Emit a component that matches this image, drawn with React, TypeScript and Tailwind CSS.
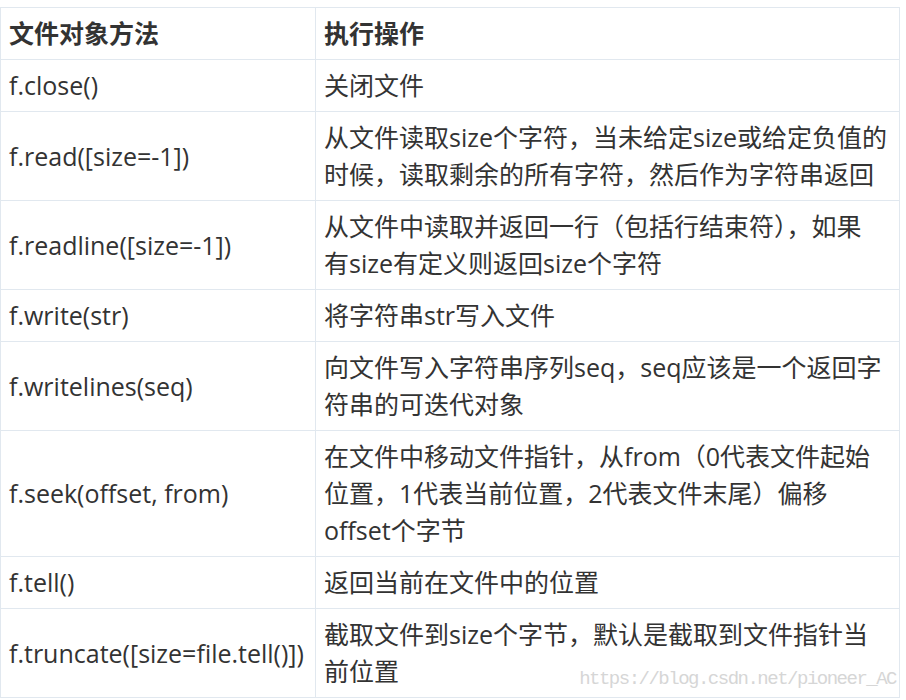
import type { ReactNode } from 'react';

const rows: [string, ReactNode][] = [
  ['f.close()', '关闭文件'],
  ['f.read([size=-1])', '从文件读取size个字符，当未给定size或给定负值的时候，读取剩余的所有字符，然后作为字符串返回'],
  ['f.readline([size=-1])', <>从文件中读取并返回一行（包括行结束符），如果<br />有size有定义则返回size个字符</>],
  ['f.write(str)', '将字符串str写入文件'],
  ['f.writelines(seq)', '向文件写入字符串序列seq，seq应该是一个返回字符串的可迭代对象'],
  ['f.seek(offset, from)', '在文件中移动文件指针，从from（0代表文件起始位置，1代表当前位置，2代表文件末尾）偏移offset个字节'],
  ['f.tell()', '返回当前在文件中的位置'],
  ['f.truncate([size=file.tell()])', '截取文件到size个字节，默认是截取到文件指针当前位置'],
];

export default function App() {
  return (
    <div className="relative w-[906px] h-[700px] bg-white pt-[7px] font-['Open_Sans','Noto_Sans_CJK_SC',sans-serif] text-[#333] text-[25px] leading-[37px]">
      <table className="w-[900px] table-fixed border-collapse">
        <colgroup>
          <col className="w-[315px]" />
          <col />
        </colgroup>
        <thead>
          <tr>
            <th className="border border-[#e1e8ef] px-[8px] py-[7px] text-left font-bold">文件对象方法</th>
            <th className="border border-[#e1e8ef] px-[8px] py-[7px] text-left font-bold">执行操作</th>
          </tr>
        </thead>
        <tbody>
          {rows.map(([method, desc], i) => (
            <tr key={i}>
              <td className="border border-[#e1e8ef] px-[8px] py-[7px] align-middle whitespace-nowrap">{method}</td>
              <td className="border border-[#e1e8ef] px-[8px] py-[7px] align-middle">{desc}</td>
            </tr>
          ))}
        </tbody>
      </table>
      {/* watermark */}
      <div className="absolute right-[10px] bottom-[9px] font-['Liberation_Mono',monospace] text-[19px] leading-[24px] text-[#d6d6d6] tracking-[-1.5px]">
        https://blog.csdn.net/pioneer_AC
      </div>
    </div>
  );
}
